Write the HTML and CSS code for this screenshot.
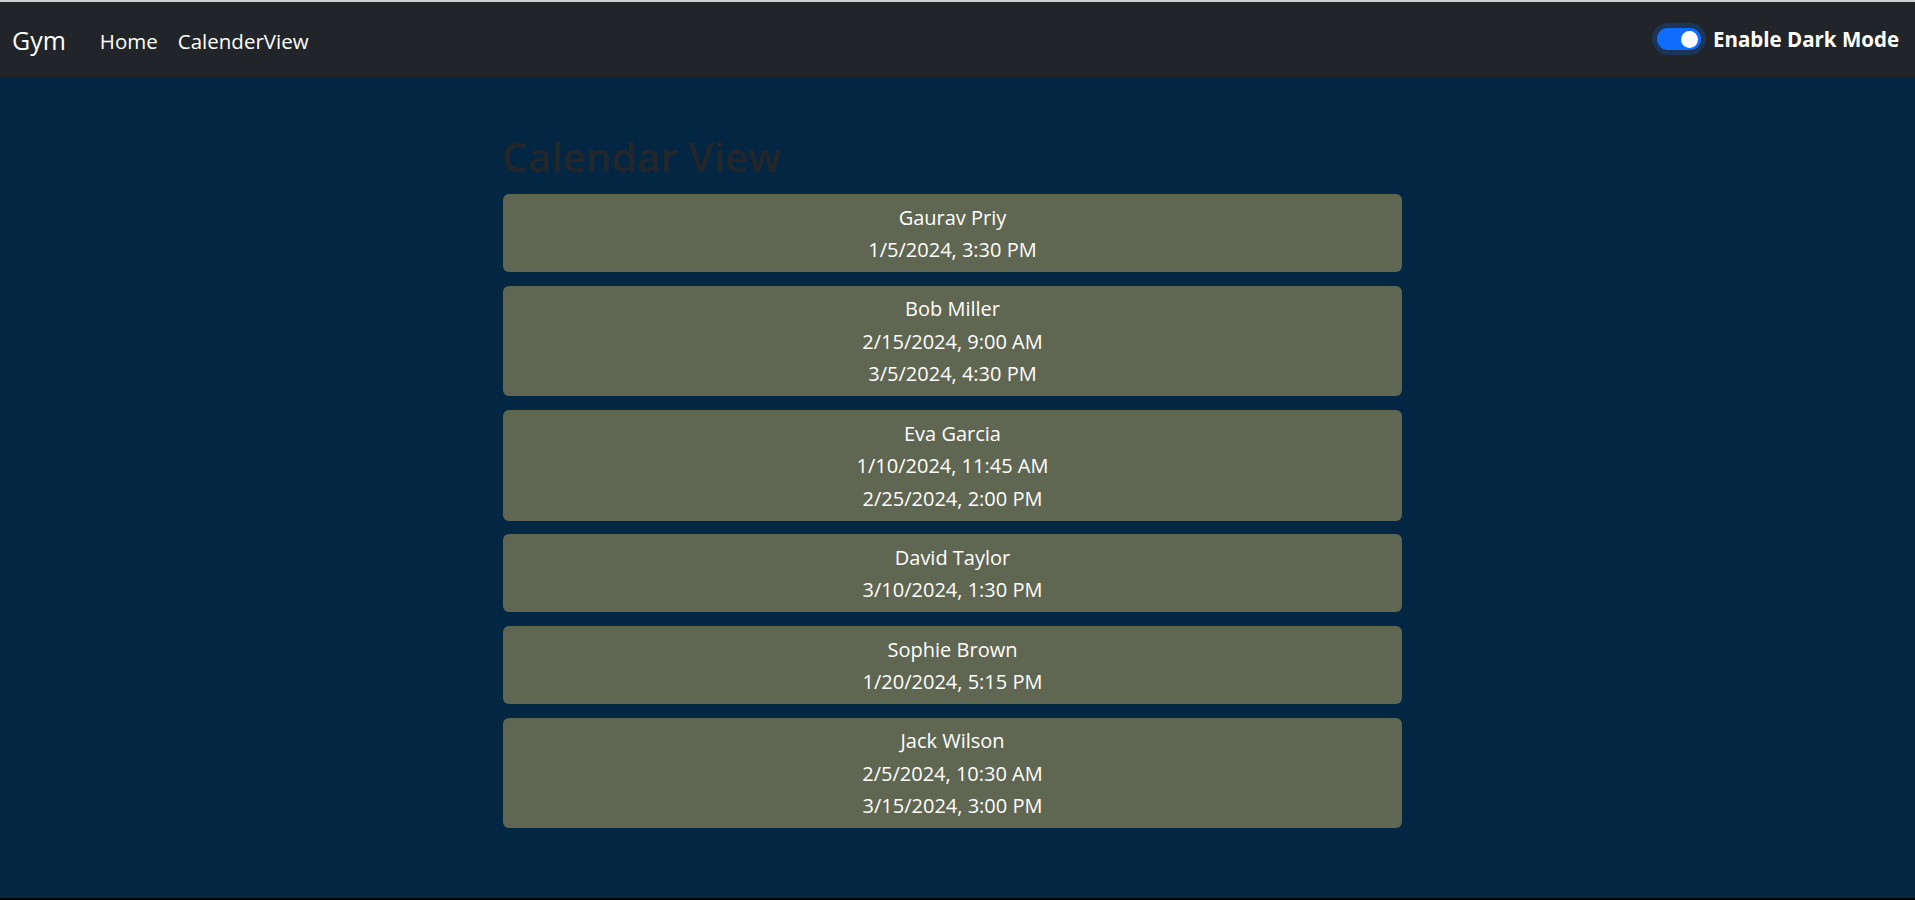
FILE: index.html
```html
<!DOCTYPE html>
<html lang="en">
<head>
<meta charset="utf-8">
<title>Gym</title>
<link rel="stylesheet" href="styles.css">
</head>
<body>
<div class="app">
  <nav class="navbar">
    <div class="nav-left">
      <a class="brand" href="#">Gym</a>
      <a class="nav-link" href="#">Home</a>
      <a class="nav-link" href="#">CalenderView</a>
    </div>
    <label class="switch-wrap">
      <span class="switch"><span class="knob"></span></span>
      <span class="switch-label">Enable Dark Mode</span>
    </label>
  </nav>
  <main class="main">
    <div class="container">
      <h2 class="title">Calendar View</h2>
      <div class="list">
        <div class="card"><div>Gaurav Priy</div><div>1/5/2024, 3:30 PM</div></div>
        <div class="card"><div>Bob Miller</div><div>2/15/2024, 9:00 AM</div><div>3/5/2024, 4:30 PM</div></div>
        <div class="card"><div>Eva Garcia</div><div>1/10/2024, 11:45 AM</div><div>2/25/2024, 2:00 PM</div></div>
        <div class="card"><div>David Taylor</div><div>3/10/2024, 1:30 PM</div></div>
        <div class="card"><div>Sophie Brown</div><div>1/20/2024, 5:15 PM</div></div>
        <div class="card"><div>Jack Wilson</div><div>2/5/2024, 10:30 AM</div><div>3/15/2024, 3:00 PM</div></div>
      </div>
    </div>
  </main>
</div>
</body>
</html>
```
FILE: styles.css
```css
* { box-sizing: border-box; }
html, body { margin: 0; padding: 0; }
body {
  font-family: "Open Sans", "Noto Sans", "Liberation Sans", sans-serif;
  color: #fff;
  background: #000;
}
.app {
  height: 900px;
  display: flex;
  flex-direction: column;
  border-top: 2px solid #cdcdcd;
  border-bottom: 2px solid #000;
}
.navbar {
  height: 75px;
  flex: none;
  background: #212529;
  display: flex;
  align-items: center;
  justify-content: space-between;
  padding: 0 16px 0 12px;
}
.nav-left { display: flex; align-items: center; }
.brand {
  color: #fff;
  text-decoration: none;
  font-size: 25px;
  margin-right: 24px;
  margin-top: 1px;
}
.nav-link {
  color: #fff;
  text-decoration: none;
  font-size: 20.5px;
  padding: 0 10px;
  margin-top: 2px;
}
.switch-wrap {
  display: flex;
  align-items: center;
  gap: 12px;
  margin-top: -1px;
}
.switch {
  width: 44px;
  height: 22px;
  border-radius: 11px;
  background: #0d6efd;
  box-shadow: 0 0 0 5px #1a3556;
  display: flex;
  align-items: center;
  justify-content: flex-end;
  padding-right: 3px;
}
.knob {
  width: 17px;
  height: 17px;
  border-radius: 50%;
  background: #fff;
}
.switch-label {
  font-weight: 700;
  font-size: 20.5px;
  color: #fff;
}
.main {
  flex: 1;
  background: #032642;
  padding-right: 10px;
  display: flex;
  justify-content: center;
}
.container { width: 899px; padding-top: 54px; }
.title {
  margin: 0 0 12px -1px;
  font-size: 40.5px;
  font-weight: 600;
  line-height: 51px;
  color: #23272b;
}
.list { display: flex; flex-direction: column; gap: 13.75px; }
.card {
  background: #5f6651;
  border-radius: 6px;
  padding: 7.5px 12px 5.5px;
  text-align: center;
  font-size: 20px;
  line-height: 32.5px;
}
```
